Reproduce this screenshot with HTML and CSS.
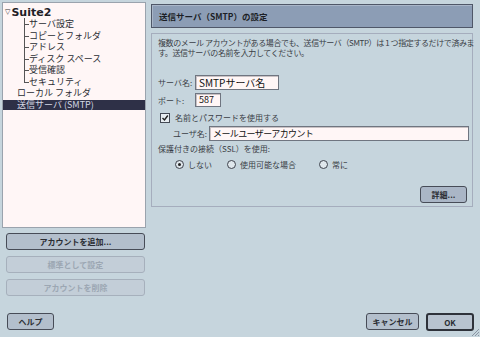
FILE: index.html
```html
<!DOCTYPE html>
<html lang="ja">
<head>
    <meta charset="UTF-8">
    <title>送信サーバ (SMTP) の設定</title>
    <link rel="stylesheet" href="styles.css">
</head>
<body>

<div class="dialog">
    <div class="main">
        <div class="left">
            <div class="tree">
                <div class="root"><span class="twisty">&#9661;</span>Suite2</div>
                <ul class="children">
                    <li>サーバ設定</li>
                    <li>コピーとフォルダ</li>
                    <li>アドレス</li>
                    <li>ディスク スペース</li>
                    <li>受信確認</li>
                    <li>セキュリティ</li>
                </ul>
                <div class="top-item">ローカル フォルダ</div>
                <div class="top-item selected">送信サーバ (SMTP)</div>
            </div>
            <button class="btn wide">アカウントを追加...</button>
            <button class="btn wide" disabled>標準として設定</button>
            <button class="btn wide" disabled>アカウントを削除</button>
        </div>

        <div class="right">
            <div class="header">送信サーバ（SMTP）の設定</div>
            <div class="content">
                <p class="intro">
                    <span>複数のメール アカウントがある場合でも、送信サーバ（SMTP）は 1 つ指定するだけで済みま</span>
                    <span>す。送信サーバの名前を入力してください。</span>
                </p>

                <div class="row first">
                    <span class="label">サーバ名:</span>
                    <div class="field server">SMTPサーバ名</div>
                </div>
                <div class="row">
                    <span class="label">ポート:</span>
                    <div class="field port">587</div>
                </div>
                <div class="row check">
                    <span class="checkbox">
                        <svg width="8" height="8" viewBox="0 0 8 8"><path d="M1.5 4 L3.5 6 L6.8 1.5" fill="none" stroke="#222" stroke-width="1.4"/></svg>
                    </span>
                    <span>名前とパスワードを使用する</span>
                </div>
                <div class="row user">
                    <span class="label">ユーザ名:</span>
                    <div class="field username">メールユーザーアカウント</div>
                </div>
                <div class="ssl-label">保護付きの接続（SSL）を使用:</div>
                <div class="radios">
                    <span class="radio on"><i></i>しない</span>
                    <span class="radio"><i></i>使用可能な場合</span>
                    <span class="radio"><i></i>常に</span>
                </div>
                <div class="advanced">
                    <button class="btn details">詳細...</button>
                </div>
            </div>
        </div>
    </div>

    <div class="footer">
        <button class="btn help">ヘルプ</button>
        <div class="actions">
            <button class="btn cancel">キャンセル</button>
            <button class="btn ok">OK</button>
        </div>
    </div>

    <svg class="grip" width="10" height="10" viewBox="0 0 10 10">
        <path d="M9 2 L2 9 M9 5 L5 9 M9 8 L8 9" stroke="#8a95a3" stroke-width="1"/>
    </svg>
</div>

</body>
</html>
```

FILE: styles.css
```css
* {
    box-sizing: border-box;
}

body {
    margin: 0;
    background: #c6d5dd;
    font-family: "Noto Sans CJK JP", "Noto Sans", sans-serif;
    font-size: 8px;
    color: #3a3e46;
}

.dialog {
    position: relative;
    width: 480px;
    height: 337px;
    display: flex;
    flex-direction: column;
}

.main {
    display: flex;
    gap: 5px;
    padding: 2px 7px 0 2px;
}

/* Left column */
.left {
    width: 144px;
    flex-shrink: 0;
    display: flex;
    flex-direction: column;
}

.tree {
    height: 226px;
    background: #fff6f6;
    border: 1px solid #9aa3ad;
    padding-top: 3px;
    font-size: 9px;
    color: #2a2d33;
}

.root {
    height: 12px;
    line-height: 12px;
    font-family: "DejaVu Sans", sans-serif;
    font-size: 11px;
    font-weight: bold;
    color: #1e2026;
    padding-left: 2px;
}

.twisty {
    font-size: 7px;
    font-weight: normal;
    vertical-align: 2px;
    margin-right: 1px;
    color: #333;
}

.children {
    list-style: none;
    margin: 0;
    padding: 0 0 0 26px;
}

.children li {
    position: relative;
    height: 11.5px;
    line-height: 11.5px;
}

.children li::before {
    content: "";
    position: absolute;
    left: -5px;
    top: 0;
    width: 4px;
    height: 6px;
    border-left: 1px solid #555;
    border-bottom: 1px solid #555;
}

.children li::after {
    content: "";
    position: absolute;
    left: -5px;
    top: 6px;
    height: 6px;
    border-left: 1px solid #555;
}

.children li:last-child::after {
    display: none;
}

.top-item {
    height: 11.5px;
    line-height: 11.5px;
    padding-left: 14px;
}

.top-item.selected {
    background: #2e3047;
    color: #d4d8e4;
    height: 10px;
    line-height: 10px;
    margin-top: 1px;
}

.btn {
    font-family: "Noto Sans CJK JP", sans-serif;
    font-size: 8px;
    font-weight: bold;
    color: #2a2d33;
    background: #b3bfcc;
    border: 1.5px solid #474c57;
    border-radius: 3px;
    height: 17px;
    padding: 0;
    line-height: 13px;
}

.btn:disabled {
    background: #c3ced8;
    border-color: #a6b0bc;
    color: #9ca7b3;
}

.wide {
    width: 139px;
    margin: 5px 0 0 4px;
    height: 17px;
}

.wide + .wide {
    margin-top: 6px;
}

/* Right column */
.right {
    flex: 1;
    min-width: 0;
    margin-top: 2px;
}

.header {
    height: 24px;
    background: #8c9db5;
    border: 1px solid #4f5768;
    box-shadow: inset 1px 1px 0 #a9b6c8;
    padding-left: 7px;
    line-height: 22px;
    font-size: 8.5px;
    font-weight: bold;
    color: #1c1f26;
}

.content {
    margin-top: 5px;
    height: 174px;
    border: 1px solid #a5adbd;
    padding: 4px 3px 0 6px;
}

.intro {
    margin: 0;
    line-height: 10px;
    letter-spacing: -0.4px;
}

.intro span {
    display: block;
    white-space: nowrap;
}

.row {
    display: flex;
    align-items: center;
    margin-top: 3px;
}

.row.first {
    margin-top: 17px;
}

.label {
    width: 37px;
}

.field {
    background: #fff6f6;
    border: 1px solid #6f7580;
    box-shadow: inset 1px 1px 0 #c9c2c4;
    padding-left: 3px;
    color: #111;
    white-space: nowrap;
    overflow: hidden;
}

.server {
    width: 84px;
    height: 15px;
    line-height: 13px;
    font-size: 10px;
}

.port {
    width: 26px;
    height: 14px;
    line-height: 12px;
    font-size: 9px;
}

.row.check {
    margin-top: 5px;
    height: 11px;
}

.checkbox {
    width: 10px;
    height: 10px;
    border: 1px solid #444a55;
    background: #e8eef2;
    margin: 0 5px 0 2px;
    display: flex;
}

.row.user {
    margin-top: 3px;
    padding-left: 15px;
}

.row.user .label {
    width: 36px;
}

.username {
    flex: 1;
    height: 15px;
    line-height: 13px;
    font-size: 9px;
    letter-spacing: -0.6px;
}

.ssl-label {
    margin-top: 2px;
    line-height: 12px;
}

.radios {
    display: flex;
    margin-top: 3px;
    padding-left: 17px;
    height: 12px;
    align-items: center;
}

.radio {
    display: flex;
    align-items: center;
}

.radio i {
    width: 9px;
    height: 9px;
    border: 1px solid #3d424c;
    border-radius: 50%;
    background: #dfe7ec;
    margin-right: 4px;
    display: flex;
    align-items: center;
    justify-content: center;
}

.radio.on i::after {
    content: "";
    width: 3px;
    height: 3px;
    border-radius: 50%;
    background: #222;
}

.radio:nth-child(2) {
    margin-left: 15px;
}

.radio:nth-child(3) {
    margin-left: 23px;
}

.advanced {
    display: flex;
    justify-content: flex-end;
    margin-top: 16px;
    padding-right: 2px;
}

.details {
    width: 47px;
    height: 17px;
    background: #aab6c6;
}

/* Footer */
.footer {
    margin-top: auto;
    display: flex;
    justify-content: space-between;
    align-items: flex-end;
    padding: 0 6px 6px 7px;
}

.help {
    width: 47px;
    margin-bottom: 1px;
}

.actions {
    display: flex;
    gap: 7px;
    align-items: flex-end;
}

.cancel {
    width: 53px;
    margin-bottom: 1px;
}

.ok {
    width: 48px;
    height: 18px;
    border: 2px solid #2e323a;
    background: #b8c3cf;
}

.grip {
    position: absolute;
    right: 0;
    bottom: 0;
}
```
